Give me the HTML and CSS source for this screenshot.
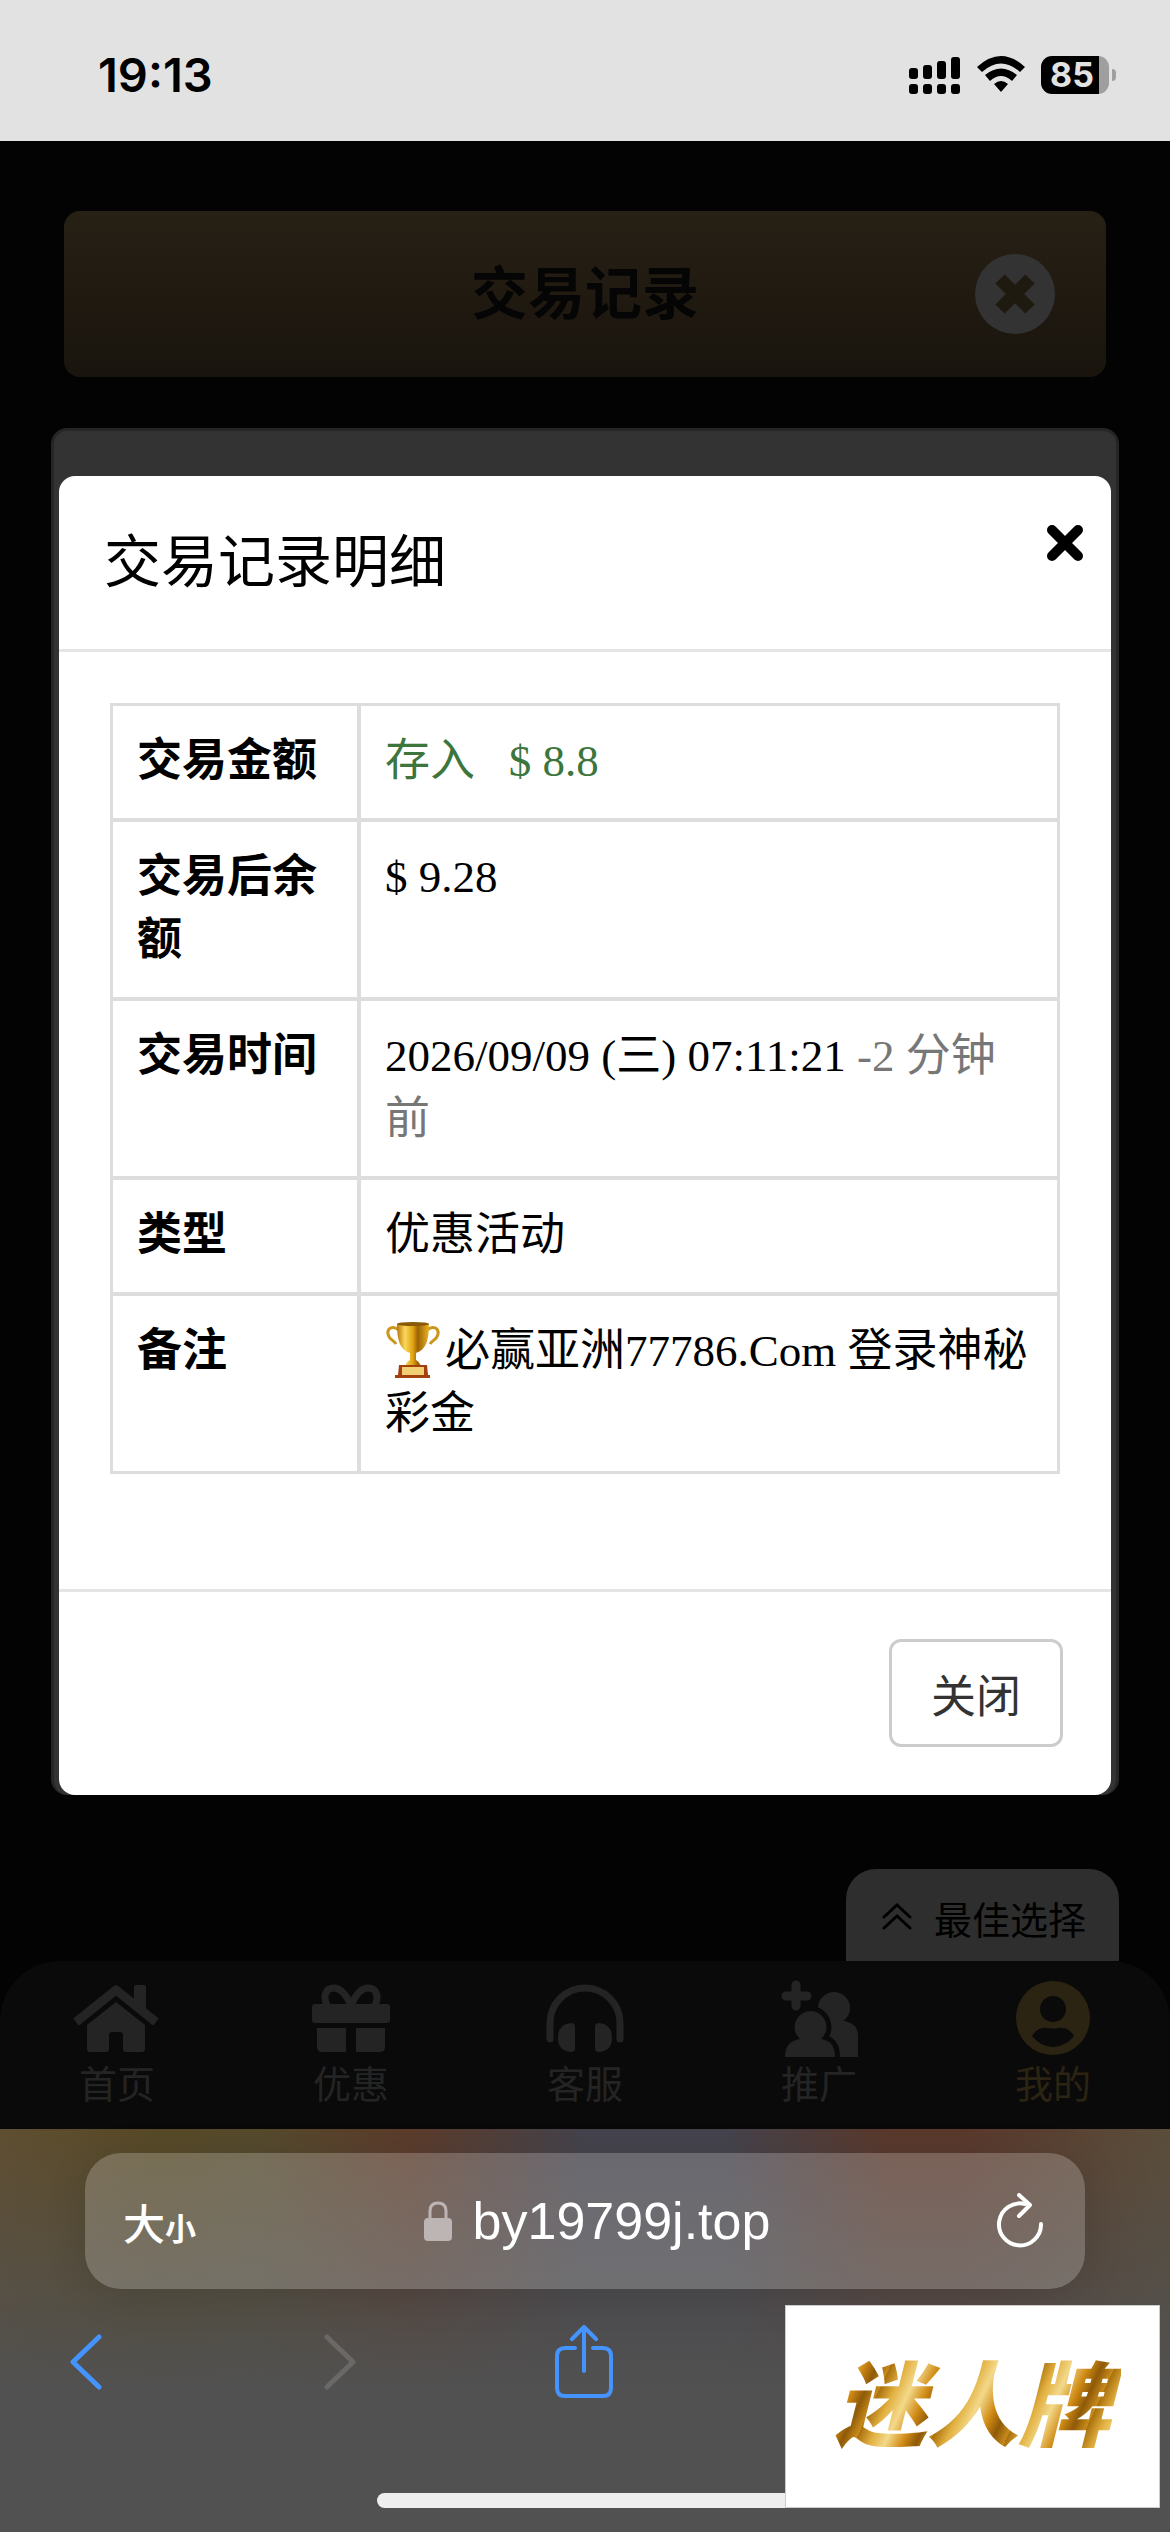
FILE: index.html
```
<!DOCTYPE html>
<html lang="zh-CN">

<head>
    <meta charset="UTF-8">
    <meta name="viewport" content="width=device-width, initial-scale=1.0">
    <title>交易记录</title>
    <link rel="stylesheet" href="styles.css">
</head>

<body>
    <div class="status">
        <span class="time">19:13</span>
        <div class="status-icons">
            <svg width="52" height="38" viewBox="0 0 52 38">
                <rect x="0" y="12" width="9" height="11" rx="3" />
                <rect x="14" y="9" width="9" height="14" rx="3" />
                <rect x="28" y="5" width="9" height="18" rx="3" />
                <rect x="42" y="1" width="9" height="22" rx="3" />
                <rect x="0" y="28" width="9" height="10" rx="3" />
                <rect x="14" y="28" width="9" height="10" rx="3" />
                <rect x="28" y="28" width="9" height="10" rx="3" />
                <rect x="42" y="28" width="9" height="10" rx="3" />
            </svg>
            <svg width="48" height="38" viewBox="0 0 48 38">
                <path d="M0 11 Q24 -11 48 11 L43 16 Q24 -1 5 16 Z" />
                <path d="M8 19 Q24 6 40 19 L35 25 Q24 15 13 25 Z" />
                <path d="M17 28 Q24 22 31 28 L24 36 Z" />
            </svg>
            <div class="battery"><span>85</span></div>
        </div>
    </div>

    <main>
        <header class="page-head">
            <h1>交易记录</h1>
            <button class="page-close" aria-label="返回">
                <svg width="80" height="80" viewBox="0 0 80 80">
                    <circle cx="40" cy="40" r="40" fill="#333" />
                    <path d="M25 25 L55 55 M55 25 L25 55" stroke="#1f1a10" stroke-width="13" />
                </svg>
            </button>
        </header>

        <section class="records">
            <div class="modal" role="dialog" aria-labelledby="modal-title">
                <div class="modal-header">
                    <h2 id="modal-title">交易记录明细</h2>
                    <button class="modal-close" aria-label="关闭">
                        <svg width="36" height="36" viewBox="0 0 36 36">
                            <path d="M5 5 L31 31 M31 5 L5 31" stroke="#000" stroke-width="10" stroke-linecap="round" />
                        </svg>
                    </button>
                </div>
                <div class="modal-body">
                    <table>
                        <tr>
                            <th scope="row">交易金额</th>
                            <td class="income">存入 &nbsp; $ 8.8</td>
                        </tr>
                        <tr>
                            <th scope="row">交易后余额</th>
                            <td>$ 9.28</td>
                        </tr>
                        <tr>
                            <th scope="row">交易时间</th>
                            <td>2026/09/09 (三) 07:11:21 <span class="ago">-2 分钟前</span></td>
                        </tr>
                        <tr>
                            <th scope="row">类型</th>
                            <td>优惠活动</td>
                        </tr>
                        <tr>
                            <th scope="row">备注</th>
                            <td><svg class="trophy" width="60" height="56" viewBox="0 0 60 56">
                                    <defs>
                                        <linearGradient id="cup">
                                            <stop offset="0" stop-color="#b9790a" />
                                            <stop offset=".25" stop-color="#fbd75c" />
                                            <stop offset=".5" stop-color="#e0a210" />
                                            <stop offset=".65" stop-color="#9c6204" />
                                            <stop offset="1" stop-color="#eab324" />
                                        </linearGradient>
                                    </defs>
                                    <path d="M14 8 C8 3 2 6 3 12 C4 18 9 18 11 22 M42 8 C48 3 54 6 53 12 C52 18 47 18 45 22" fill="none" stroke="#cc951b" stroke-width="3" />
                                    <path d="M12 2 H44 C44 18 41 28 31 31 L31 38 Q35 40 36 45 H20 Q21 40 25 38 L25 31 C15 28 12 18 12 2 Z" fill="url(#cup)" />
                                    <ellipse cx="28" cy="2" rx="16" ry="2" fill="#8b5a08" />
                                    <path d="M14 43 H42 L43 53 H45 V56 H10 V53 H13 Z" fill="#a3400f" />
                                    <rect x="17" y="45" width="22" height="8" fill="#f2cf72" />
                                </svg>必赢亚洲77786.Com 登录神秘彩金</td>
                        </tr>
                    </table>
                </div>
                <div class="modal-footer">
                    <button class="btn">关闭</button>
                </div>
            </div>
        </section>

        <button class="best">
            <svg width="30" height="28" viewBox="0 0 30 28">
                <path d="M2 14 L15 2 L28 14 M2 25 L15 13 L28 25" fill="none" stroke="#000" stroke-width="3" stroke-linecap="round" />
            </svg>
            最佳选择
        </button>
    </main>

    <nav>
        <a href="#">
            <svg viewBox="0 0 90 78">
                <path d="M4 43 L44 11 L84 43" fill="none" stroke="#242424" stroke-width="9" stroke-linejoin="round" />
                <path d="M62 8 Q62 6 64 6 H72 Q74 6 74 8 V37 L62 27 Z" />
                <path d="M44 23 L73 46 V70 Q73 73 70 73 H54 Q51 73 51 70 V56 Q51 53 48 53 H40 Q37 53 37 56 V70 Q37 73 34 73 H18 Q15 73 15 70 V46 Z" />
            </svg>
            首页
        </a>
        <a href="#">
            <svg viewBox="0 0 90 78">
                <path d="M45 26 C39 13 34 9 28 9 C19 9 17 18 21 26 M45 26 C51 13 56 9 62 9 C71 9 73 18 69 26" fill="none" stroke="#242424" stroke-width="7" />
                <rect x="6" y="25" width="78" height="19" rx="3" />
                <path d="M11 49 H40 V73 H16 Q11 73 11 68 Z" />
                <path d="M50 49 H79 V68 Q79 73 74 73 H50 Z" />
            </svg>
            优惠
        </a>
        <a href="#">
            <svg viewBox="0 0 90 78">
                <path d="M10 60 V44 A35 35 0 0 1 80 44 V60" fill="none" stroke="#242424" stroke-width="7" stroke-linecap="round" />
                <path d="M31 44 Q35 44 35 48 V69 Q35 73 31 73 Q18 72 18 59 Q18 45 31 44 Z" />
                <path d="M59 44 Q55 44 55 48 V69 Q55 73 59 73 Q72 72 72 59 Q72 45 59 44 Z" />
            </svg>
            客服
        </a>
        <a href="#">
            <svg viewBox="0 0 90 78">
                <circle cx="60" cy="29" r="16" />
                <path d="M52 42 H71 Q84 45 84 56 V78 H40 Z" />
                <g stroke="#0a0a0a" stroke-width="10" paint-order="stroke">
                    <path d="M37 32 A16 16 0 0 0 26 60 Q11 62 11 78 H61 Q61 62 47 60 A16 16 0 0 0 37 32 Z" />
                </g>
                <path d="M22 6 V27 M12 17 H33" stroke="#242424" stroke-width="9" stroke-linecap="round" />
            </svg>
            推广
        </a>
        <a href="#" class="active">
            <svg viewBox="0 0 90 78">
                <circle cx="45" cy="39" r="37" />
                <circle cx="45" cy="30" r="13" fill="#0a0a0a" />
                <path d="M24 57 Q30 47 40 49 Q45 50 50 49 Q60 47 66 57 Q57 68 45 68 Q33 68 24 57 Z" fill="#0a0a0a" />
            </svg>
            我的
        </a>
    </nav>

    <footer class="browser">
        <div class="address">
            <button class="text-size">大<small>小</small></button>
            <div class="url">
                <svg width="30" height="42" viewBox="0 0 30 42">
                    <path d="M7 20 V11 Q7 3 15 3 Q23 3 23 11 V20" fill="none" stroke="#bdb5b4" stroke-width="3" />
                    <rect x="1" y="18" width="28" height="23" rx="4" fill="#bdb5b4" />
                </svg>
                <span>by19799j.top</span>
            </div>
            <button class="reload" aria-label="刷新">
                <svg width="46" height="56" viewBox="0 0 46 56">
                    <path d="M28 11 A21 21 0 1 0 44 31 M22 2 L33 12 L22 23" fill="none" stroke="#fff" stroke-width="4" stroke-linecap="round" stroke-linejoin="round" />
                </svg>
            </button>
        </div>
        <div class="tools">
            <button class="back" aria-label="后退">
                <svg width="34" height="56" viewBox="0 0 34 56">
                    <path d="M30 3 L4 28 L30 53" fill="none" stroke="#4593fd" stroke-width="5" stroke-linecap="round" stroke-linejoin="round" />
                </svg>
            </button>
            <button class="forward" aria-label="前进">
                <svg width="34" height="56" viewBox="0 0 34 56">
                    <path d="M4 3 L30 28 L4 53" fill="none" stroke="#6b6967" stroke-width="5" stroke-linecap="round" stroke-linejoin="round" />
                </svg>
            </button>
            <button class="share" aria-label="分享">
                <svg width="58" height="74" viewBox="0 0 58 74">
                    <path d="M20 23 H10 Q2 23 2 31 V63 Q2 71 10 71 H48 Q56 71 56 63 V31 Q56 23 48 23 H38 M29 46 V3 M17 14 L29 2 L41 14" fill="none" stroke="#4593fd" stroke-width="4" stroke-linecap="round" stroke-linejoin="round" />
                </svg>
            </button>
        </div>
        <div class="home-bar"></div>
        <div class="brand"><span>迷人牌</span></div>
    </footer>
</body>

</html>
```
FILE: styles.css
```
* {
    box-sizing: border-box;
}

body {
    margin: 0;
    min-height: 100vh;
    display: flex;
    flex-direction: column;
    background-color: #030303;
    font-family: "Liberation Sans", "Noto Sans CJK SC", sans-serif;
}

button {
    margin: 0;
    padding: 0;
    border: none;
    background: none;
    font-family: inherit;
    cursor: pointer;
}

svg {
    display: block;
}

/* status bar */
.status {
    display: flex;
    justify-content: space-between;
    align-items: center;
    height: 141px;
    padding: 8px 61px 0 98px;
    background-color: #e2e2e2;
}

.time {
    font: 600 47px/56px Inter, sans-serif;
}

.status-icons {
    display: flex;
    gap: 16px;
}

.battery {
    position: relative;
    width: 68px;
    height: 38px;
    padding-right: 6px;
    border-radius: 11px;
    background: linear-gradient(to right, #000 58px, #9f9f9f 58px);
    color: #e2e2e2;
    font: 700 34px/38px Inter, sans-serif;
    text-align: center;
}

.battery::after {
    content: "";
    position: absolute;
    right: -7px;
    top: 13px;
    width: 4px;
    height: 12px;
    border-radius: 0 4px 4px 0;
    background-color: #9f9f9f;
}

/* page */
main {
    flex: 1;
    display: flex;
    flex-direction: column;
    padding: 70px 51px 0;
}

.page-head {
    position: relative;
    display: flex;
    justify-content: center;
    align-items: center;
    height: 166px;
    margin: 0 13px;
    border-radius: 16px;
    background: linear-gradient(#272015, #19140d);
}

h1 {
    margin: 0;
    font-size: 57px;
    line-height: 80px;
    font-weight: 700;
    color: #050505;
}

.page-close {
    position: absolute;
    right: 51px;
}

.records {
    margin-top: 51px;
    padding: 45px 5px 0;
    border: 3px solid #262626;
    border-bottom: none;
    border-radius: 16px;
    background-color: #333;
}

/* modal */
.modal {
    border-radius: 16px;
    background-color: #fff;
    color: #000;
}

.modal-header {
    position: relative;
    padding: 46px 45px;
    border-bottom: 3px solid #e5e5e5;
}

h2 {
    margin: 0;
    font-size: 57px;
    line-height: 81px;
    font-weight: 400;
}

.modal-close {
    position: absolute;
    top: 49px;
    right: 28px;
}

.modal-body {
    padding: 51px 51px 115px;
}

table {
    width: 100%;
    table-layout: fixed;
    border: 1px solid #ddd;
    border-spacing: 0;
    font-family: "Liberation Serif", "Noto Sans CJK SC", serif;
    font-size: 45px;
    line-height: 63px;
}

th,
td {
    padding: 24px 24px 25px;
    border: 2px solid #ddd;
    text-align: left;
    vertical-align: top;
}

th {
    width: 248px;
    font-weight: 700;
}

.income {
    color: #3c763d;
}

.ago {
    color: #777;
}

.trophy {
    display: inline-block;
    vertical-align: -12px;
}

.modal-footer {
    display: flex;
    justify-content: flex-end;
    padding: 47px 48px 48px;
    border-top: 3px solid #e5e5e5;
}

.btn {
    height: 108px;
    padding: 0 39px;
    border: 3px solid #ccc;
    border-radius: 12px;
    background-color: #fff;
    color: #333;
    font-size: 45px;
}

.best {
    display: flex;
    align-items: center;
    align-self: flex-end;
    gap: 22px;
    height: 92px;
    margin-top: auto;
    padding: 4px 33px 0 36px;
    border-radius: 30px 30px 0 0;
    background-color: #2e2e2e;
    color: #000;
    font-size: 38px;
}

/* bottom menu */
nav {
    display: flex;
    padding: 18px 0 16px;
    border-radius: 60px 60px 0 0;
    background-color: #0a0a0a;
}

nav a {
    flex: 1;
    display: flex;
    flex-direction: column;
    align-items: center;
    color: #242424;
    fill: #242424;
    font-size: 38px;
    line-height: 56px;
    text-decoration: none;
}

nav svg {
    width: 90px;
    height: 78px;
}

nav .active {
    color: #2c2412;
    fill: #2c2412;
}

/* browser toolbar */
.browser {
    position: relative;
    padding: 24px 85px;
    background:
        linear-gradient(rgba(81, 81, 81, 0), #515151 65%),
        linear-gradient(to right, #5f4e31, #574926 14%, #554a2c 22%, #5c3b2a 35%, #44424c 50%, #44424c 62%, #5a382b 76%, #5a382b 82%, #5a4d3a);
    height: 403px;
}

.address {
    display: flex;
    justify-content: space-between;
    align-items: center;
    height: 136px;
    padding: 0 42px 0 38px;
    border-radius: 36px;
    background-color: rgba(255, 255, 255, 0.2);
    box-shadow: 0 6px 40px rgba(0, 0, 0, 0.12);
    color: #fff;
}

.text-size {
    color: #fff;
    font-size: 42px;
    font-weight: 500;
}

.text-size small {
    font-size: 31px;
    font-weight: 700;
}

.url {
    display: flex;
    align-items: center;
    gap: 20px;
    font: 400 52px/60px "Liberation Sans", sans-serif;
}

.tools {
    display: flex;
    align-items: center;
    height: 74px;
    margin: 36px -16px 0;
}

.forward {
    margin-left: 220px;
}

.share {
    margin-left: 198px;
}

.home-bar {
    width: 416px;
    height: 15px;
    margin: 94px auto 0;
    border-radius: 8px;
    background-color: #eee;
}

.brand {
    position: absolute;
    right: 10px;
    bottom: 24px;
    display: flex;
    align-items: center;
    justify-content: center;
    width: 375px;
    height: 203px;
    border: 1px solid #ccc;
    background-color: #fff;
}

.brand span {
    padding: 0 10px;
    background: repeating-linear-gradient(115deg, #a86f0c, #e2b040 14px, #f3d98a 28px, #d08a15 44px, #8f5a08 56px, #c98c1c 68px);
    -webkit-background-clip: text;
    background-clip: text;
    color: transparent;
    font-size: 92px;
    line-height: 120px;
    font-style: italic;
    font-weight: 900;
}
```
